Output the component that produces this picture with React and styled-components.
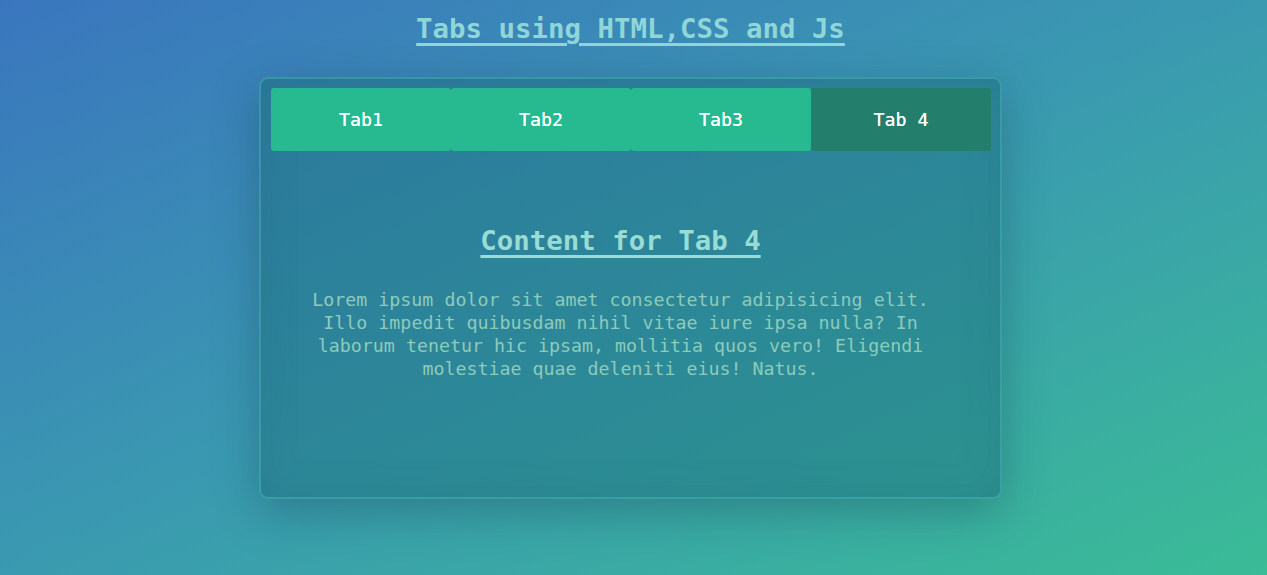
import React, { useState } from "react";
import styled, { createGlobalStyle } from "styled-components";

const Global = createGlobalStyle`
  html, body { margin: 0; padding: 0; }
  body {
    min-height: 575px;
    background: linear-gradient(to bottom right, #3a76be 0%, #3a9ab0 50%, #3abc96 100%);
    font-family: "DejaVu Sans Mono", "Liberation Mono", monospace;
  }
`;

const Page = styled.div`
  display: flex;
  flex-direction: column;
  align-items: center;
  padding: 12px 6px 0 0;
  min-height: 563px;
`;

const Title = styled.h1`
  margin: 0;
  font-size: 27.4px;
  line-height: 33px;
  font-weight: bold;
  color: #8fd6d8;
  text-decoration: underline;
  text-decoration-thickness: 3px;
  text-underline-offset: 5px;
`;

const Card = styled.div`
  margin-top: 32px;
  width: 743px;
  height: 422px;
  box-sizing: border-box;
  padding: 9px 10px;
  border: 2px solid rgba(70, 175, 180, 0.5);
  border-radius: 9px;
  background: rgba(28, 110, 125, 0.45);
  box-shadow: 0 12px 45px rgba(20, 60, 80, 0.35), inset 0 0 40px rgba(20, 80, 100, 0.15);
  display: flex;
  flex-direction: column;
`;

const TabRow = styled.div`
  display: grid;
  grid-template-columns: repeat(4, 180px);
`;

const Tab = styled.button`
  height: 63px;
  border: none;
  border-radius: 3px;
  background: ${(p) => (p.$active ? "#237e6c" : "#27b990")};
  color: #ffffff;
  font-family: "DejaVu Sans Mono", "Liberation Mono", monospace;
  font-size: 18.3px;
  font-weight: normal;
  text-shadow: 0 0 0.4px #ffffff;
  cursor: pointer;
  padding: 0;
`;

const Content = styled.div`
  display: flex;
  flex-direction: column;
  align-items: center;
  padding: 73px 20px 0 0;
`;

const Heading = styled.h2`
  margin: 0;
  font-size: 27.4px;
  line-height: 33px;
  font-weight: bold;
  color: #98dcd6;
  text-decoration: underline;
  text-decoration-thickness: 3px;
  text-underline-offset: 5px;
`;

const Text = styled.p`
  margin: 31px 0 0;
  max-width: 650px;
  text-align: center;
  font-size: 18.3px;
  line-height: 23px;
  color: #8dcbbb;
`;

const tabs = [
  { label: "Tab1", heading: "Content for Tab 1" },
  { label: "Tab2", heading: "Content for Tab 2" },
  { label: "Tab3", heading: "Content for Tab 3" },
  { label: "Tab 4", heading: "Content for Tab 4" },
];

export default function App() {
  const [active, setActive] = useState(3);
  return (
    <>
      <Global />
      <Page>
        <Title>Tabs using HTML,CSS and Js</Title>
        <Card>
          <TabRow>
            {tabs.map((t, i) => (
              <Tab key={t.label} $active={i === active} onClick={() => setActive(i)}>
                {t.label}
              </Tab>
            ))}
          </TabRow>
          <Content>
            <Heading>{tabs[active].heading}</Heading>
            <Text>
              Lorem ipsum dolor sit amet consectetur adipisicing elit. Illo impedit quibusdam nihil vitae iure ipsa nulla? In laborum tenetur hic ipsam, mollitia quos vero! Eligendi molestiae quae deleniti eius! Natus.
            </Text>
          </Content>
        </Card>
      </Page>
    </>
  );
}
